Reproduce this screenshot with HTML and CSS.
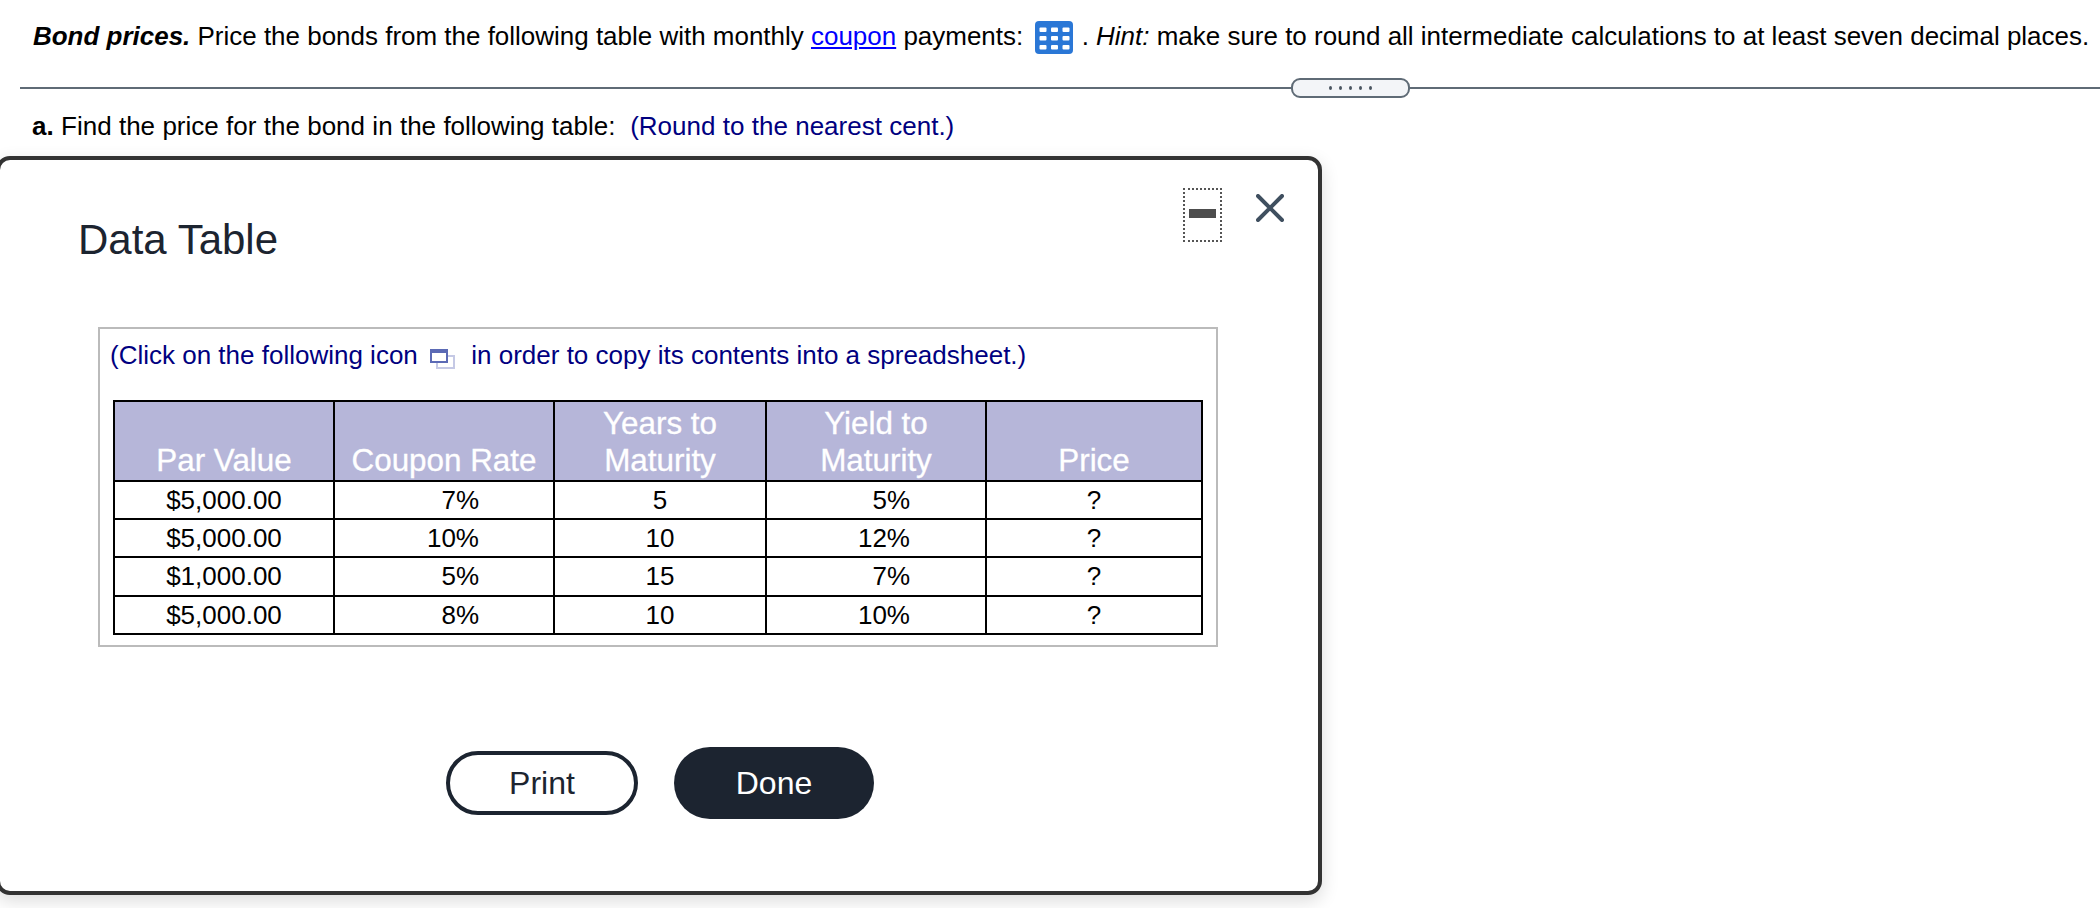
FILE: index.html
```html
<!DOCTYPE html>
<html lang="en">
<head>
    <meta charset="UTF-8">
    <title>Bond prices</title>
    <link rel="stylesheet" href="styles.css">
</head>
<body>
    <div class="question">
        <b><i>Bond prices.</i></b> Price the bonds from the following table with monthly <a href="#" class="term">coupon</a> payments:
        <svg class="grid-icon" width="38" height="33" viewBox="0 0 38 33">
            <rect x="0" y="0" width="38" height="33" rx="4" fill="#2a77d6"/>
            <g fill="#fff">
                <rect x="4.5" y="6.5" width="7" height="4.5" rx="1"/><rect x="16" y="6.5" width="7" height="4.5" rx="1"/><rect x="27.5" y="6.5" width="7" height="4.5" rx="1"/>
                <rect x="4.5" y="15" width="7" height="4.5" rx="1"/><rect x="16" y="15" width="7" height="4.5" rx="1"/><rect x="27.5" y="15" width="7" height="4.5" rx="1"/>
                <rect x="4.5" y="24" width="7" height="4.5" rx="1"/><rect x="16" y="24" width="7" height="4.5" rx="1"/><rect x="27.5" y="24" width="7" height="4.5" rx="1"/>
            </g>
        </svg>
        . <i>Hint:</i> make sure to round all intermediate calculations to at least seven decimal places.
    </div>

    <div class="divider">
        <div class="divider-pill"><span></span><span></span><span></span><span></span><span></span></div>
    </div>

    <div class="part"><b>a.</b> Find the price for the bond in the following table:&nbsp; <span class="note">(Round to the nearest cent.)</span></div>

    <div class="modal">
        <div class="modal-head">
            <h2>Data Table</h2>
            <div class="modal-controls">
                <div class="min-btn"><div class="min-bar"></div></div>
                <svg class="close-btn" width="28" height="28" viewBox="0 0 28 28">
                    <path d="M2 2 L26 26 M26 2 L2 26" stroke="#3f4f5f" stroke-width="4" stroke-linecap="round" fill="none"/>
                </svg>
            </div>
        </div>

        <div class="table-box">
            <div class="copy-note">(Click on the following icon
                <svg class="copy-icon" width="25" height="20" viewBox="0 0 25 20">
                    <rect x="7" y="7" width="17" height="12" fill="#fff" stroke="#c5c9e5" stroke-width="2"/>
                    <rect x="1" y="1" width="16" height="12" fill="#fff" stroke="#5b6ab5" stroke-width="2"/>
                    <rect x="1" y="1" width="16" height="3" fill="#5b6ab5"/>
                </svg>
                in order to copy its contents into a spreadsheet.)</div>
            <table class="data">
                <colgroup>
                    <col class="col-a"><col class="col-b"><col class="col-c"><col class="col-d"><col class="col-e">
                </colgroup>
                <thead>
                    <tr>
                        <th>Par Value</th>
                        <th>Coupon Rate</th>
                        <th>Years to<br>Maturity</th>
                        <th>Yield to<br>Maturity</th>
                        <th>Price</th>
                    </tr>
                </thead>
                <tbody>
                    <tr><td>$5,000.00</td><td class="pct">7%</td><td>5</td><td class="pct pct-yield">5%</td><td>?</td></tr>
                    <tr><td>$5,000.00</td><td class="pct">10%</td><td>10</td><td class="pct pct-yield">12%</td><td>?</td></tr>
                    <tr><td>$1,000.00</td><td class="pct">5%</td><td>15</td><td class="pct pct-yield">7%</td><td>?</td></tr>
                    <tr><td>$5,000.00</td><td class="pct">8%</td><td>10</td><td class="pct pct-yield">10%</td><td>?</td></tr>
                </tbody>
            </table>
        </div>

        <div class="modal-actions">
            <button class="btn btn-print">Print</button>
            <button class="btn btn-done">Done</button>
        </div>
    </div>
</body>
</html>
```

FILE: styles.css
```css
* {
    box-sizing: border-box;
}

html, body {
    height: 100%;
}

body {
    margin: 0;
    overflow: hidden;
    background: #fff;
    color: #000;
    font-family: "Liberation Sans", Arial, sans-serif;
    font-size: 26px;
}

.question {
    padding: 20px 0 0 33px;
    height: 78px;
    font-size: 25.98px;
    line-height: 32px;
    white-space: nowrap;
}

.term {
    color: #0000ff;
}

.grid-icon {
    vertical-align: -9px;
    margin: 0 1px 0 5px;
    filter: blur(0.5px);
}

.divider {
    height: 20px;
    margin-left: 20px;
    display: flex;
    align-items: center;
    background: linear-gradient(#5f6b76, #5f6b76) center / 100% 2px no-repeat;
}

.divider-pill {
    flex: none;
    margin-left: 1271px;
    width: 119px;
    height: 20px;
    background: #f3f5f8;
    border: 2px solid #5f6b76;
    border-radius: 9px;
    display: flex;
    justify-content: center;
    align-items: center;
    gap: 7px;
}

.divider-pill span {
    width: 3px;
    height: 4px;
    border-radius: 50%;
    background: #4a5560;
}

.part {
    padding: 12px 0 0 32px;
    line-height: 32px;
    word-spacing: 0.1px;
}

.note {
    color: #000080;
}

.modal {
    position: absolute;
    left: -4px;
    top: 156px;
    width: 1326px;
    height: 739px;
    background: #fff;
    border: 4px solid #333;
    border-radius: 14px;
    box-shadow: 0 6px 18px rgba(0, 0, 0, 0.14);
}

.modal-head {
    display: flex;
    justify-content: space-between;
    align-items: flex-start;
    height: 167px;
    padding: 28px 34px 0 78px;
}

.modal-head h2 {
    margin: 29px 0 0;
    font-size: 42px;
    font-weight: normal;
    line-height: 46px;
    color: #1c2430;
}

.modal-controls {
    display: flex;
    align-items: flex-start;
    gap: 34px;
}

.min-btn {
    width: 39px;
    height: 54px;
    border: 2px dotted #555;
    display: flex;
    align-items: flex-start;
    justify-content: center;
    padding-top: 19px;
}

.min-bar {
    width: 27px;
    height: 9px;
    background: #4d4d4d;
}

.close-btn {
    margin-top: 6px;
}

.table-box {
    margin-left: 98px;
    width: 1120px;
    height: 320px;
    border: 2px solid #bbb;
    padding: 10px 13px 0 10px;
}

.copy-note {
    color: #000080;
    line-height: 32px;
    height: 61px;
    white-space: nowrap;
}

.copy-icon {
    vertical-align: -5px;
    margin: 0 9px 0 5px;
}

.data {
    border-collapse: collapse;
    table-layout: fixed;
    width: 1088px;
    margin-left: 3px;
    color: #000;
}

.col-a { width: 220px; }
.col-b { width: 220px; }
.col-c { width: 212px; }
.col-d { width: 220px; }
.col-e { width: 216px; }

.data th, .data td {
    border: 2px solid #000;
    text-align: center;
    padding: 0;
}

.data th {
    height: 80px;
    padding-bottom: 1px;
    background: #b6b6d9;
    color: #fff;
    font-size: 31.4px;
    font-weight: normal;
    line-height: 37px;
    vertical-align: bottom;
    -webkit-text-stroke: 0.3px #fff;
}

.data td {
    height: 38.2px;
    line-height: 32px;
}

.data td.pct {
    text-align: right;
    padding-right: 74px;
}

.data td.pct-yield {
    padding-right: 75px;
}

.modal-actions {
    display: flex;
    align-items: center;
    gap: 36px;
    margin-top: 100px;
    padding-left: 446px;
}

.btn {
    font-family: inherit;
    font-size: 32px;
    border-radius: 36px;
    padding: 0;
    color: #1c2430;
}

.btn-print {
    width: 192px;
    height: 64px;
    background: #fff;
    border: 4px solid #1c2430;
}

.btn-done {
    width: 200px;
    height: 72px;
    background: #1c2430;
    border: none;
    color: #fff;
}
```
